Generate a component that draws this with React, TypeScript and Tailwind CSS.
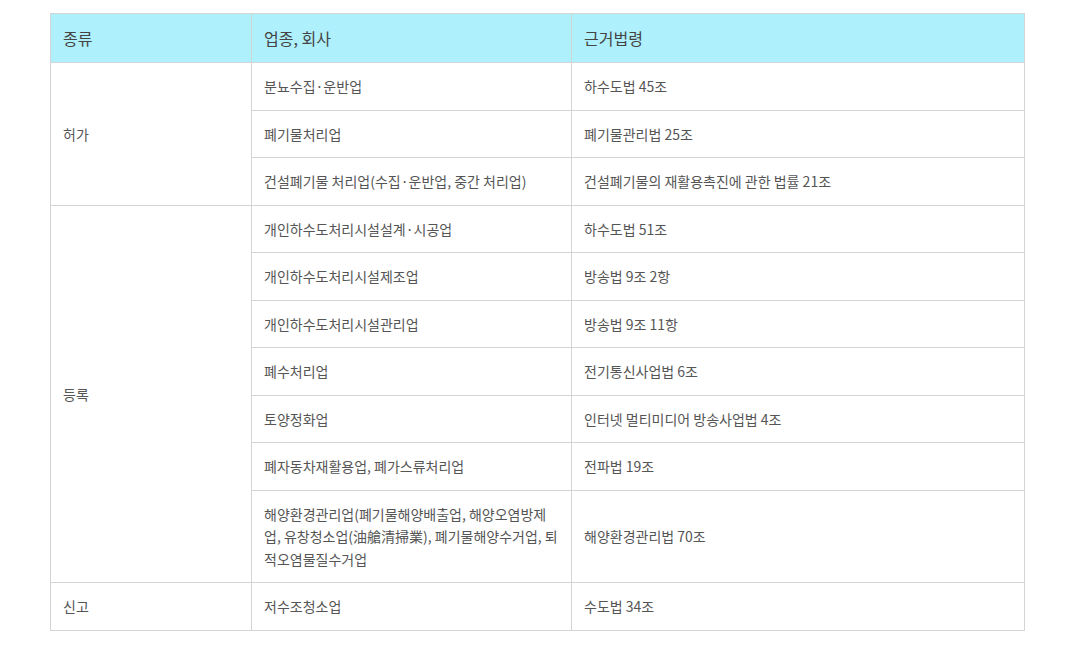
const rows: { kind: string; items: [string, string][] }[] = [
  {
    kind: "허가",
    items: [
      ["분뇨수집·운반업", "하수도법 45조"],
      ["폐기물처리업", "폐기물관리법 25조"],
      ["건설폐기물 처리업(수집·운반업, 중간 처리업)", "건설폐기물의 재활용촉진에 관한 법률 21조"],
    ],
  },
  {
    kind: "등록",
    items: [
      ["개인하수도처리시설설계·시공업", "하수도법 51조"],
      ["개인하수도처리시설제조업", "방송법 9조 2항"],
      ["개인하수도처리시설관리업", "방송법 9조 11항"],
      ["폐수처리업", "전기통신사업법 6조"],
      ["토양정화업", "인터넷 멀티미디어 방송사업법 4조"],
      ["폐자동차재활용업, 폐가스류처리업", "전파법 19조"],
      [
        "해양환경관리업(폐기물해양배출업, 해양오염방제업, 유창청소업(油艙清掃業), 폐기물해양수거업, 퇴적오염물질수거업",
        "해양환경관리법 70조",
      ],
    ],
  },
  {
    kind: "신고",
    items: [["저수조청소업", "수도법 34조"]],
  },
]

const cell = "border border-[#d4d4d4] px-3 py-3 align-middle"

export default function App() {
  return (
    <div className="min-h-screen bg-white pt-[13px] pl-[50px] font-['Noto_Sans_CJK_KR','Noto_Sans',sans-serif]">
      <table className="w-[975px] table-fixed border-collapse text-[14px] leading-[22.5px] text-[#555]">
        <colgroup>
          <col className="w-[201px]" />
          <col className="w-[320px]" />
          <col />
        </colgroup>
        <thead>
          <tr className="bg-[#aff0fd] text-[16px] text-[#444]">
            <th className={`${cell} h-[49px] text-left font-normal`}>종류</th>
            <th className={`${cell} text-left font-normal`}>업종, 회사</th>
            <th className={`${cell} text-left font-normal`}>근거법령</th>
          </tr>
        </thead>
        <tbody>
          {rows.map((group) =>
            group.items.map(([biz, law], i) => (
              <tr key={group.kind + i}>
                {i === 0 && (
                  <td className={cell} rowSpan={group.items.length}>
                    {group.kind}
                  </td>
                )}
                <td className={`${cell} h-[47.5px]`}>{biz}</td>
                <td className={cell}>{law}</td>
              </tr>
            )),
          )}
        </tbody>
      </table>
    </div>
  )
}
